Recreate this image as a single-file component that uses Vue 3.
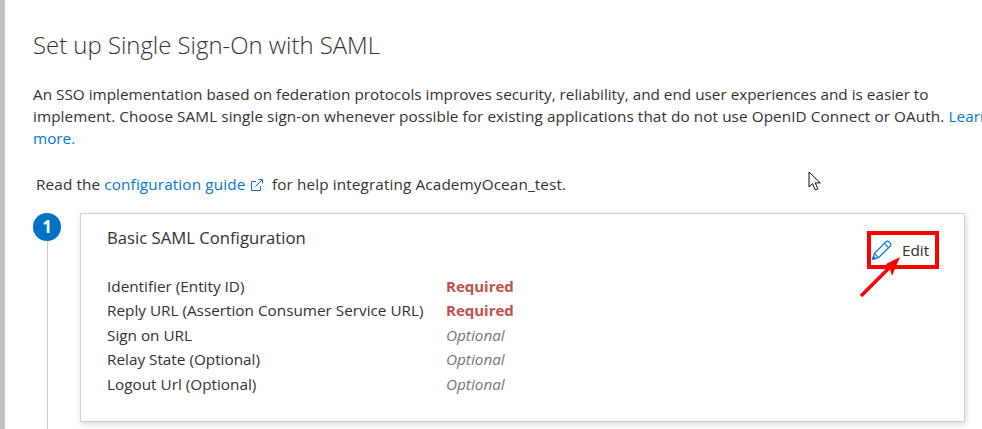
<script setup>
const rows = [
  { label: 'Identifier (Entity ID)', value: 'Required', required: true },
  { label: 'Reply URL (Assertion Consumer Service URL)', value: 'Required', required: true },
  { label: 'Sign on URL', value: 'Optional', required: false },
  { label: 'Relay State (Optional)', value: 'Optional', required: false },
  { label: 'Logout Url (Optional)', value: 'Optional', required: false },
]
</script>

<template>
  <div class="page">
    <div class="rail"></div>
    <main class="main">
      <h1 class="title">Set up Single Sign-On with SAML</h1>
      <p class="intro">
        An SSO implementation based on federation protocols improves security, reliability, and end user experiences and is easier to<br />
        <span class="tight">implement. Choose SAML single sign-on whenever possible for existing applications that do not use OpenID Connect or OAuth. <a class="link">Learn</a></span><br />
        <a class="link">more.</a>
      </p>
      <p class="guide">
        Read the <a class="link">configuration guide</a>
        <svg class="ext" width="12" height="12" viewBox="0 0 12 12" fill="none" stroke="#0078d4" stroke-width="1">
          <path d="M5 2.500H.5v9h9V7" />
          <path d="M4.500 7.500 11 1M7.500 .5h4v4" />
        </svg>
        for help integrating AcademyOcean_test.
      </p>
      <section class="step">
        <div class="marker">
          <div class="badge">1</div>
          <div class="line"></div>
        </div>
        <div class="card">
          <div class="card-left">
            <h2 class="card-title">Basic SAML Configuration</h2>
            <div class="rows">
              <div v-for="r in rows" :key="r.label" class="row">
                <span class="label">{{ r.label }}</span>
                <span :class="r.required ? 'required' : 'optional'">{{ r.value }}</span>
              </div>
            </div>
          </div>
          <button class="edit">
            <svg width="20" height="20" viewBox="0 0 20 20" fill="none" stroke="#0078d4" stroke-width="1.200">
              <path d="M.7 19.300 2.300 13.500 13.800 1.900a2.400 2.400 0 0 1 3.400 0l.9.9a2.400 2.400 0 0 1 0 3.400L6.500 17.700z" />
              <path d="M2.300 13.500l4.200 4.200M12.300 3.400l4.300 4.300" />
              <path d="M.7 19.300 1.500 16.500 3.500 18.500z" fill="#0078d4" />
            </svg>
            <span>Edit</span>
          </button>
        </div>
      </section>
    </main>

    <svg class="arrow" width="52" height="50" viewBox="0 0 52 50">
      <path d="M2 45 31 16" stroke="#f00" stroke-width="3.500" fill="none" />
      <path d="M41 6 33 25 31 18 27 13z" fill="#f00" />
    </svg>
    <svg class="cursor" width="14" height="21" viewBox="0 0 14 21">
      <path d="M1 1v15l3.600-3.400L7.200 19l2.600-1.100L7.300 11.900h5z" fill="#fff" stroke="#111" stroke-width="1" />
    </svg>
  </div>
</template>

<style scoped>
.page {
  position: relative;
  display: flex;
  width: 982px;
  height: 429px;
  overflow: hidden;
  background: #fff;
  color: #323130;
  font-family: "Open Sans", "Noto Sans", sans-serif;
  font-size: 15.300px;
}
.rail {
  width: 5px;
  flex: none;
  background: #c0c0c0;
}
.main {
  flex: 1;
  min-width: 0;
  padding: 29px 0 0 28px;
}
.title {
  margin: 0;
  font-size: 23.900px;
  font-weight: 300;
  line-height: 32px;
}
.intro {
  margin: 22px 0 0;
  line-height: 22px;
  white-space: nowrap;
}
.tight {
  letter-spacing: .08px;
}
.guide {
  margin: 24px 0 0 3px;
  line-height: 22px;
  white-space: nowrap;
  letter-spacing: .12px;
}
.link {
  color: #0078d4;
}
.ext {
  margin: 0 5px 0 5.500px;
  vertical-align: -1px;
}
.step {
  display: flex;
  margin-top: 18px;
  height: 240px;
}
.marker {
  display: flex;
  flex-direction: column;
  align-items: center;
  width: 28px;
  margin-right: 19px;
}
.badge {
  width: 28px;
  height: 28px;
  border-radius: 50%;
  background: #0072c6;
  color: #fff;
  font-weight: 700;
  font-size: 17px;
  line-height: 27px;
  text-align: center;
}
.line {
  flex: 1;
  width: 1px;
  background: #c8c8c8;
}
.card {
  display: flex;
  justify-content: space-between;
  width: 885px;
  height: 209px;
  box-sizing: border-box;
  padding: 12px 25px 0 26px;
  border: 1px solid #d0d0d0;
  box-shadow: 1px 2px 6px rgba(0, 0, 0, .16);
}
.card-title {
  margin: 0;
  font-size: 16.700px;
  font-weight: 400;
  line-height: 24px;
}
.rows {
  margin-top: 23.900px;
}
.row {
  display: flex;
  height: 24.500px;
  line-height: 24px;
}
.label {
  width: 339px;
}
.required {
  color: #c0504d;
  font-weight: 700;
  font-size: 15px;
}
.optional {
  color: #767676;
  font-style: italic;
}
.edit {
  display: flex;
  align-items: center;
  gap: 10px;
  align-self: flex-start;
  box-sizing: border-box;
  width: 72px;
  height: 38px;
  margin-top: 5px;
  padding: 0 0 0 1px;
  border: 4px solid #f00;
  background: #fff;
  color: #323130;
  font: inherit;
}
.arrow {
  position: absolute;
  left: 859px;
  top: 251px;
}
.cursor {
  position: absolute;
  left: 808px;
  top: 171px;
}
</style>
